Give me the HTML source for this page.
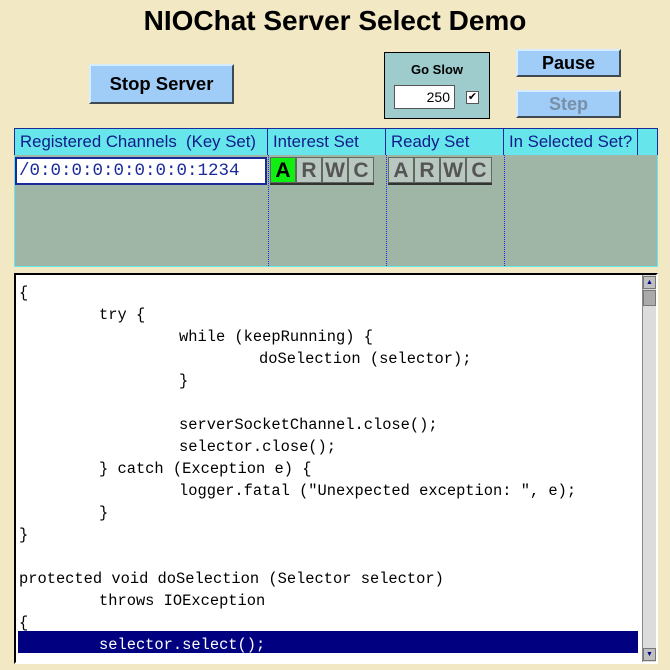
<!DOCTYPE html>
<html><head><style>
*{margin:0;padding:0;box-sizing:border-box}
body{width:670px;height:670px;background:#f2e8c4;position:relative;overflow:hidden;font-family:"Liberation Sans",sans-serif}
.a{position:absolute}
.btn{background:#a0ccf8;border-top:2px solid #d8ecff;border-left:2px solid #d8ecff;border-right:2px solid #404850;border-bottom:2px solid #404850;font-weight:bold;text-align:center}
.hd{top:128px;height:27px;background:#66e6ea;border-right:1px solid #1a2a9a;color:#101a8c;font-size:16.8px;line-height:26px;padding-left:5px;border-top:1px solid #1a2a9a;white-space:nowrap}
.k{display:inline-block;width:26px;height:26px;background:#b8c8c0;border:1px solid #606860;color:#555;font-weight:bold;font-size:21px;text-align:center;line-height:25px}
.code div{height:22px;line-height:22px;white-space:pre}
</style></head><body>
<div class="a" style="left:0;top:5px;width:670px;text-align:center;font-size:28px;font-weight:bold;color:#000">NIOChat Server Select Demo</div>
<div class="a btn" style="left:89px;top:64px;width:145px;height:40px;font-size:18.5px;line-height:36px">Stop Server</div>
<div class="a" style="left:384px;top:52px;width:106px;height:67px;background:#9ecccc;border:1px solid #000">
 <div style="text-align:center;font-weight:bold;font-size:13px;margin-top:9px">Go Slow</div>
 <div class="a" style="left:9px;top:32px;width:61px;height:24px;background:#fff;border:1px solid #555;font-size:14px;text-align:right;padding-right:4px;line-height:22px">250</div>
 <div class="a" style="left:81px;top:38px;width:13px;height:13px;background:#fff;border:1px solid #555;font-size:11px;line-height:11px;text-align:center">✔</div>
</div>
<div class="a btn" style="left:516px;top:49px;width:105px;height:28px;font-size:18px;line-height:24px">Pause</div>
<div class="a btn" style="left:516px;top:90px;width:105px;height:28px;font-size:18px;line-height:24px;color:#7890a8">Step</div>
<div class="a" style="left:14px;top:128px;width:644px;height:139px;background:#9fb5a5;border:1px solid #66e6ea;border-top:none"></div>
<div class="a hd" style="left:14px;width:254px;border-left:1px solid #1a2a9a">Registered Channels&nbsp; (Key Set)</div>
<div class="a hd" style="left:268px;width:118px">Interest Set</div>
<div class="a hd" style="left:386px;width:118px">Ready Set</div>
<div class="a hd" style="left:504px;width:134px">In Selected Set?</div>
<div class="a hd" style="left:638px;width:20px"></div>
<div class="a" style="left:268px;top:155px;height:111px;border-left:1px dotted #1a2aee"></div>
<div class="a" style="left:386px;top:155px;height:111px;border-left:1px dotted #1a2aee"></div>
<div class="a" style="left:504px;top:155px;height:111px;border-left:1px dotted #1a2aee"></div>
<div class="a" style="left:15px;top:157px;width:252px;height:28px;background:#fff;border:2px solid #1a2a9a;font-family:'Liberation Mono',monospace;font-size:17.5px;color:#1a2a9a;line-height:24px;padding-left:2px;white-space:nowrap;overflow:hidden">/0:0:0:0:0:0:0:0:1234</div>
<div class="a" style="left:270px;top:157px;white-space:nowrap;font-size:0;border-bottom:2px solid #333"><span class="k" style="background:#10f010;color:#000">A</span><span class="k">R</span><span class="k">W</span><span class="k">C</span></div>
<div class="a" style="left:388px;top:157px;white-space:nowrap;font-size:0;border-bottom:2px solid #333"><span class="k">A</span><span class="k">R</span><span class="k">W</span><span class="k">C</span></div>
<div class="a" style="left:14px;top:273px;width:644px;height:391px;background:#fff;border-top:2px solid #000;border-left:2px solid #000;border-right:2px solid #fff;border-bottom:2px solid #fff"></div>
<div class="a" style="left:642px;top:275px;width:14px;height:387px;background:#dcdcdc;border-left:1px solid #888"></div>
<div class="a" style="left:643px;top:276px;width:13px;height:13px;background:#c0c0c0;border:1px solid #777;font-size:7px;color:#00008b;text-align:center;line-height:11px">▲</div>
<div class="a" style="left:643px;top:290px;width:13px;height:16px;background:#aaa;border:1px solid #777"></div>
<div class="a" style="left:643px;top:648px;width:13px;height:13px;background:#c0c0c0;border:1px solid #777;font-size:7px;color:#00008b;text-align:center;line-height:11px">▼</div>
<div class="a" style="left:18px;top:631px;width:620px;height:22px;background:#000080"></div>
<div class="a code" style="left:19px;top:282px;font-family:'Liberation Mono',monospace;font-size:15.4px;color:#000">
<div>{</div>
<div style="padding-left:80px">try {</div>
<div style="padding-left:160px">while (keepRunning) {</div>
<div style="padding-left:240px">doSelection (selector);</div>
<div style="padding-left:160px">}</div>
<div></div>
<div style="padding-left:160px">serverSocketChannel.close();</div>
<div style="padding-left:160px">selector.close();</div>
<div style="padding-left:80px">} catch (Exception e) {</div>
<div style="padding-left:160px">logger.fatal ("Unexpected exception: ", e);</div>
<div style="padding-left:80px">}</div>
<div>}</div>
<div></div>
<div>protected void doSelection (Selector selector)</div>
<div style="padding-left:80px">throws IOException</div>
<div>{</div>
<div style="padding-left:80px;color:#fff">selector.select();</div>
</div>
</body></html>
